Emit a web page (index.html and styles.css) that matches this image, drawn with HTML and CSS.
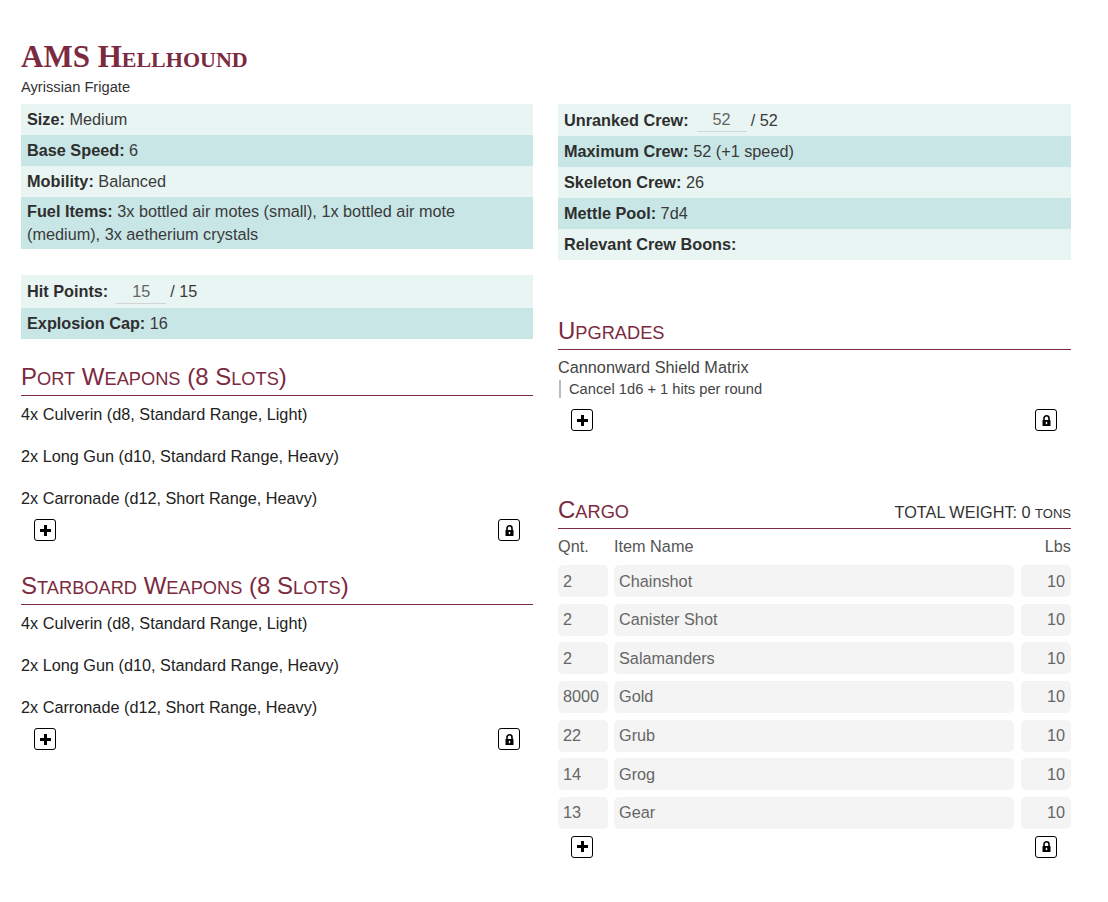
FILE: index.html
```html
<!DOCTYPE html>
<html>
<head>
<meta charset="utf-8">
<link rel="stylesheet" href="styles.css">
</head>
<body>
<div class="page">
  <header class="title-block">
    <h1 class="ship-name">AMS Hellhound</h1>
    <div class="ship-type">Ayrissian Frigate</div>
  </header>
  <div class="columns">
    <div class="col">
      <div class="stats">
        <div class="row light"><b>Size:</b> Medium</div>
        <div class="row dark"><b>Base Speed:</b> 6</div>
        <div class="row light"><b>Mobility:</b> Balanced</div>
        <div class="row dark fuel"><b>Fuel Items:</b> 3x bottled air motes (small), 1x bottled air mote (medium), 3x aetherium crystals</div>
      </div>
      <div class="stats hp-block">
        <div class="row light input-row"><b>Hit Points:</b><input class="line-input" value="15"><span>/ 15</span></div>
        <div class="row dark"><b>Explosion Cap:</b> 16</div>
      </div>

      <h2 class="section-title port">P<span class="sm">ORT</span> W<span class="sm">EAPONS</span> (8 S<span class="sm">LOTS</span>)</h2>
      <div class="weapons">
        <div>4x Culverin (d8, Standard Range, Light)</div>
        <div>2x Long Gun (d10, Standard Range, Heavy)</div>
        <div>2x Carronade (d12, Short Range, Heavy)</div>
      </div>
      <div class="btn-row">
        <span class="btn"><svg width="11" height="11" viewBox="0 0 11 11"><rect x="4" y="0" width="3" height="11" fill="#000"/><rect x="0" y="4" width="11" height="3" fill="#000"/></svg></span>
        <span class="btn"><svg width="9" height="11" viewBox="0 0 9 11"><path d="M2 5V3.3a2.5 2.5 0 0 1 5 0V5" fill="none" stroke="#000" stroke-width="1.6"/><rect x="0.5" y="5" width="8" height="6" rx="0.6" fill="#000"/><rect x="3.8" y="6.8" width="1.4" height="2.4" fill="#fff"/></svg></span>
      </div>

      <h2 class="section-title starboard">S<span class="sm">TARBOARD</span> W<span class="sm">EAPONS</span> (8 S<span class="sm">LOTS</span>)</h2>
      <div class="weapons">
        <div>4x Culverin (d8, Standard Range, Light)</div>
        <div>2x Long Gun (d10, Standard Range, Heavy)</div>
        <div>2x Carronade (d12, Short Range, Heavy)</div>
      </div>
      <div class="btn-row">
        <span class="btn"><svg width="11" height="11" viewBox="0 0 11 11"><rect x="4" y="0" width="3" height="11" fill="#000"/><rect x="0" y="4" width="11" height="3" fill="#000"/></svg></span>
        <span class="btn"><svg width="9" height="11" viewBox="0 0 9 11"><path d="M2 5V3.3a2.5 2.5 0 0 1 5 0V5" fill="none" stroke="#000" stroke-width="1.6"/><rect x="0.5" y="5" width="8" height="6" rx="0.6" fill="#000"/><rect x="3.8" y="6.8" width="1.4" height="2.4" fill="#fff"/></svg></span>
      </div>
    </div>

    <div class="col">
      <div class="stats">
        <div class="row light input-row crew"><b>Unranked Crew:</b><input class="line-input" value="52"><span>/ 52</span></div>
        <div class="row dark"><b>Maximum Crew:</b> 52 (+1 speed)</div>
        <div class="row light"><b>Skeleton Crew:</b> 26</div>
        <div class="row dark"><b>Mettle Pool:</b> 7d4</div>
        <div class="row light"><b>Relevant Crew Boons:</b></div>
      </div>

      <h2 class="section-title upgrades">U<span class="sm">PGRADES</span></h2>
      <div class="upgrade-name">Cannonward Shield Matrix</div>
      <div class="upgrade-desc">Cancel 1d6 + 1 hits per round</div>
      <div class="btn-row upg-btns">
        <span class="btn"><svg width="11" height="11" viewBox="0 0 11 11"><rect x="4" y="0" width="3" height="11" fill="#000"/><rect x="0" y="4" width="11" height="3" fill="#000"/></svg></span>
        <span class="btn"><svg width="9" height="11" viewBox="0 0 9 11"><path d="M2 5V3.3a2.5 2.5 0 0 1 5 0V5" fill="none" stroke="#000" stroke-width="1.6"/><rect x="0.5" y="5" width="8" height="6" rx="0.6" fill="#000"/><rect x="3.8" y="6.8" width="1.4" height="2.4" fill="#fff"/></svg></span>
      </div>

      <h2 class="section-title cargo-title"><span class="cargo-label">C<span class="sm">ARGO</span></span><span class="total">TOTAL WEIGHT: 0 <span class="sc">TONS</span></span></h2>
      <div class="cargo-head">
        <span class="c-qnt">Qnt.</span>
        <span class="c-name">Item Name</span>
        <span class="c-lbs">Lbs</span>
      </div>
      <div class="cargo-rows">
        <div class="cargo-row"><input class="cell qnt" value="2"><input class="cell name" value="Chainshot"><input class="cell lbs" value="10"></div>
        <div class="cargo-row"><input class="cell qnt" value="2"><input class="cell name" value="Canister Shot"><input class="cell lbs" value="10"></div>
        <div class="cargo-row"><input class="cell qnt" value="2"><input class="cell name" value="Salamanders"><input class="cell lbs" value="10"></div>
        <div class="cargo-row"><input class="cell qnt" value="8000"><input class="cell name" value="Gold"><input class="cell lbs" value="10"></div>
        <div class="cargo-row"><input class="cell qnt" value="22"><input class="cell name" value="Grub"><input class="cell lbs" value="10"></div>
        <div class="cargo-row"><input class="cell qnt" value="14"><input class="cell name" value="Grog"><input class="cell lbs" value="10"></div>
        <div class="cargo-row"><input class="cell qnt" value="13"><input class="cell name" value="Gear"><input class="cell lbs" value="10"></div>
      </div>
      <div class="btn-row cargo-btns">
        <span class="btn"><svg width="11" height="11" viewBox="0 0 11 11"><rect x="4" y="0" width="3" height="11" fill="#000"/><rect x="0" y="4" width="11" height="3" fill="#000"/></svg></span>
        <span class="btn"><svg width="9" height="11" viewBox="0 0 9 11"><path d="M2 5V3.3a2.5 2.5 0 0 1 5 0V5" fill="none" stroke="#000" stroke-width="1.6"/><rect x="0.5" y="5" width="8" height="6" rx="0.6" fill="#000"/><rect x="3.8" y="6.8" width="1.4" height="2.4" fill="#fff"/></svg></span>
      </div>
    </div>
  </div>
</div>
</body>
</html>
```

FILE: styles.css
```css
* { box-sizing: border-box; }
html, body { margin: 0; padding: 0; background: #fff; }
body {
  font-family: "Liberation Sans", Arial, sans-serif;
  font-size: 16.25px;
  color: #333;
}
.page {
  width: 1050px;
  margin-left: 21px;
  padding-top: 40px;
}
.ship-name {
  margin: 0;
  font-family: "Liberation Serif", "Times New Roman", serif;
  font-weight: bold;
  font-variant: small-caps;
  font-size: 31px;
  line-height: 33px;
  color: #7b2a40;
}
.ship-type {
  margin-top: 5px;
  font-size: 14.7px;
  line-height: 18px;
  color: #333;
}
.columns {
  margin-top: 8px;
  display: grid;
  grid-template-columns: 512px 513px;
  column-gap: 25px;
  align-items: start;
}
.col { display: flex; flex-direction: column; }
.row {
  padding: 4px 6px;
  line-height: 23px;
  color: #3a3a3a;
}
.row.fuel { padding: 3px 6px; }
.row b { color: #2e2e2e; }
.light { background: #e8f5f3; }
.dark { background: #c8e6e6; }
.input-row { display: flex; align-items: center; }
.line-input {
  width: 50px;
  height: 25px;
  margin: 0 4px 0 8px;
  border: none;
  border-bottom: 1px solid #d4d4d4;
  background: transparent;
  font-family: "Liberation Sans", Arial, sans-serif;
  font-size: 16.25px;
  color: #666;
  text-align: center;
  padding: 0;
}
.crew .line-input { height: 24px; }
.hp-block { margin-top: 26px; }

.section-title {
  margin: 0;
  font-weight: normal;
  font-size: 24px;
  line-height: 26px;
  height: 32px;
  padding-bottom: 5px;
  border-bottom: 1px solid #7b2a40;
  color: #7b2a40;
}
.section-title .sm { font-size: 0.76em; line-height: 1; }
.port { margin-top: 25px; }
.starboard { margin-top: 32px; }
.upgrades { margin-top: 58px; }
.cargo-title {
  margin-top: 66px;
  display: flex;
  justify-content: space-between;
  align-items: baseline;
}
.cargo-label { line-height: 26px; }
.total {
  font-size: 16.25px;
  line-height: 20px;
  color: #333;
}
.total .sc { font-size: 0.8em; }

.weapons {
  margin-top: 6px;
  display: flex;
  flex-direction: column;
  gap: 18px;
  line-height: 24px;
  color: #222;
}
.btn-row {
  margin-top: 9px;
  padding: 0 13px;
  display: flex;
  justify-content: space-between;
}
.btn {
  width: 22px;
  height: 22px;
  border: 1px solid #000;
  border-radius: 3px;
  background: #fff;
  display: flex;
  align-items: center;
  justify-content: center;
}
.upgrade-name {
  margin-top: 5px;
  line-height: 24px;
  color: #444;
}
.upgrade-desc {
  margin-top: 1px;
  margin-left: 1px;
  padding-left: 8px;
  border-left: 2px solid #bbb;
  font-size: 14.7px;
  line-height: 18px;
  color: #444;
}
.upg-btns { margin-top: 11px; padding-right: 14px; }

.cargo-head {
  margin-top: 5px;
  display: flex;
  line-height: 24px;
  color: #555;
}
.c-qnt { width: 56px; }
.c-name { flex: 1; }
.c-lbs { width: 50px; text-align: right; }
.cargo-rows {
  margin-top: 7px;
  display: flex;
  flex-direction: column;
  gap: 6.67px;
}
.cargo-row { display: flex; gap: 6px; }
.cell {
  height: 32px;
  border: none;
  border-radius: 5px;
  background: #f4f4f4;
  font-family: "Liberation Sans", Arial, sans-serif;
  font-size: 16.25px;
  color: #666;
  padding: 0 5px;
}
.cell.qnt { width: 50px; }
.cell.name { flex: 1; margin-right: 1px; }
.cell.lbs { width: 50px; text-align: right; padding-right: 6px; }
.cargo-btns { margin-top: 7px; padding-right: 14px; }
```
